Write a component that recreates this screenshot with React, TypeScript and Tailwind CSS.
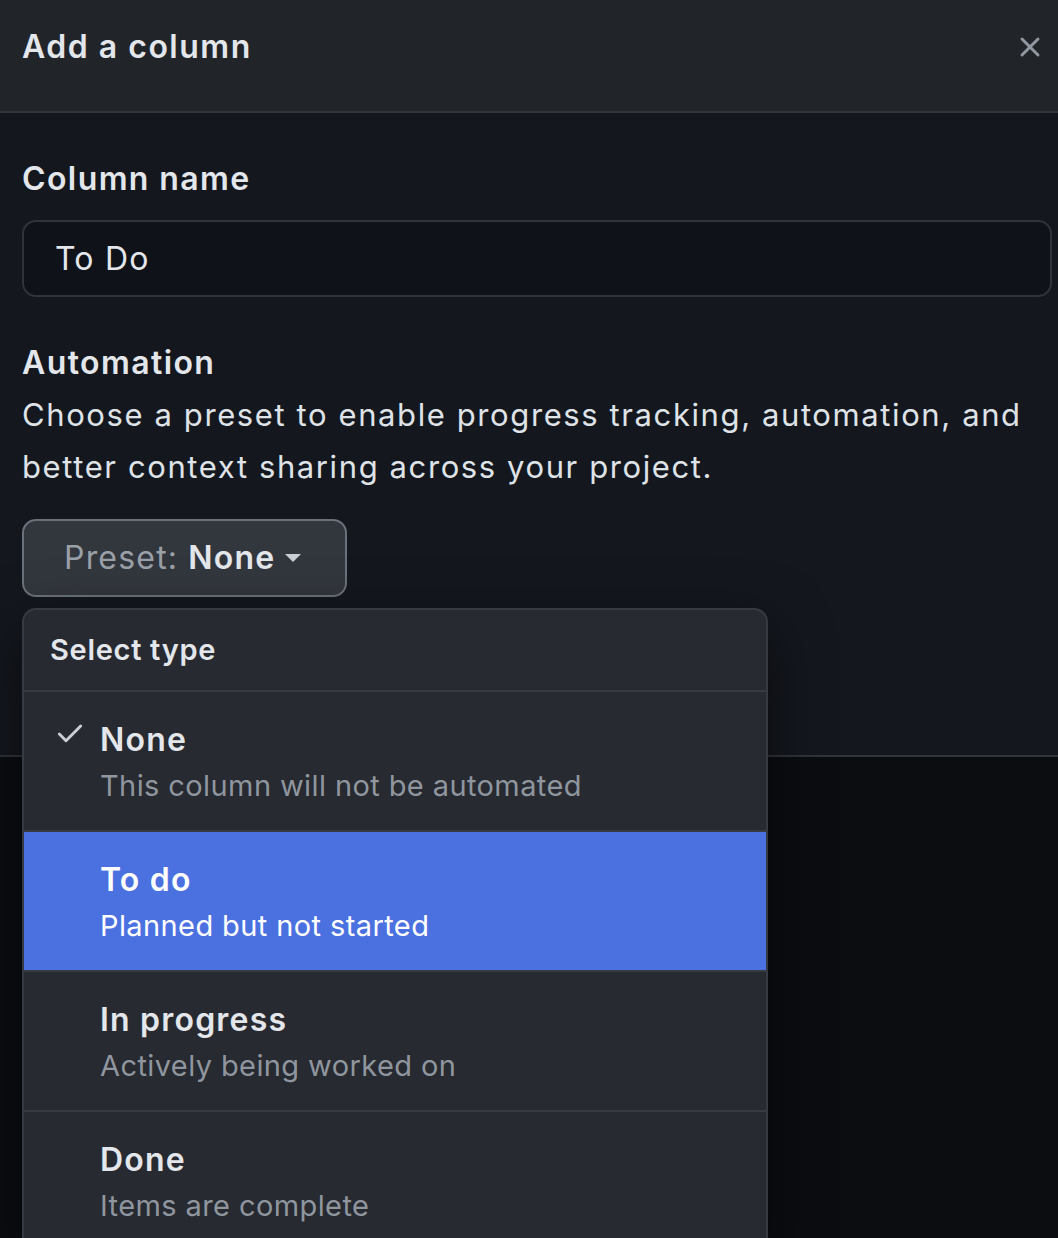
import React from 'react';
import { Check, X } from 'lucide-react';

type Preset = {
  id: string;
  title: string;
  description: string;
};

const PRESETS: Preset[] = [
  { id: 'none', title: 'None', description: 'This column will not be automated' },
  { id: 'todo', title: 'To do', description: 'Planned but not started' },
  { id: 'progress', title: 'In progress', description: 'Actively being worked on' },
  { id: 'done', title: 'Done', description: 'Items are complete' },
];

function PresetMenu({ selected, active }: { selected: string; active: string }) {
  return (
    <div className="absolute left-0 top-[calc(100%+11px)] w-[746px] rounded-[14px] border-2 border-[#363a42] bg-[#272a30] shadow-[0_20px_60px_rgba(0,0,0,0.55)] overflow-hidden">
      <div className="h-[82px] flex items-center px-[26px] border-b-2 border-[#363a42] text-[29px] tracking-[0.7px] font-semibold text-[#e3e7ec]">
        Select type
      </div>
      {PRESETS.map((p, i) => {
        const isActive = p.id === active;
        return (
          <div
            key={p.id}
            className={`relative h-[140px] pt-[28px] pl-[76px] ${i < PRESETS.length - 1 ? 'border-b-2 border-[#363a42]' : ''} ${isActive ? 'bg-[#4b71e0] border-[#4b71e0]' : ''}`}
          >
            {p.id === selected && (
              <Check className="absolute left-[30px] top-[26px] w-[32px] h-[32px] text-[#c9ced5]" strokeWidth={2.2} />
            )}
            <div className={`text-[32px] leading-[40px] tracking-[1.2px] font-semibold ${isActive ? 'text-white' : 'text-[#e3e7ec]'}`}>{p.title}</div>
            <div className={`mt-[6px] text-[29px] leading-[40px] tracking-[0.4px] ${isActive ? 'text-white' : 'text-[#8f969f]'}`}>{p.description}</div>
          </div>
        );
      })}
    </div>
  );
}

export default function App() {
  return (
    <div className="min-h-[1238px] bg-[#0b0d11] overflow-hidden font-['Inter','Liberation_Sans',sans-serif] antialiased">
      <div className="w-full">
        <div className="h-[113px] bg-[#212429] flex items-start justify-between pl-[22px] pr-[8px] pt-[27px] border-b-2 border-[#30343b]">
          <h1 className="text-[32px] leading-[40px] font-semibold text-[#e3e7ec] tracking-[1.5px]">Add a column</h1>
          <button className="w-[40px] h-[40px] flex items-center justify-center text-[#9198a1]">
            <X className="w-[32px] h-[32px]" strokeWidth={2.2} />
          </button>
        </div>

        <div className="h-[644px] bg-[#14171e] border-b-2 border-[#30343b] pl-[22px] pr-[6px] pt-[46px]">
          <label className="block text-[32px] leading-[40px] font-semibold tracking-[1.4px] text-[#e3e7ec]">Column name</label>
          <div className="mt-[21px] h-[77px] rounded-[14px] border-2 border-[#2f333a] bg-[#0f1218] flex items-center px-[31px] text-[32px] tracking-[1.2px] text-[#e3e7ec]">
            To Do
          </div>

          <div className="mt-[46px] text-[32px] leading-[40px] font-semibold tracking-[1.4px] text-[#e3e7ec]">Automation</div>
          <p className="mt-[6px] text-[31px] leading-[52px] tracking-[1.6px] text-[#dfe3e8] pr-[20px]">
            Choose a preset to enable progress tracking, automation, and better context sharing across your project.
          </p>

          <div className="relative mt-[26px] w-fit">
            <button className="h-[78px] w-[325px] rounded-[14px] border-2 border-[#6b717a] bg-[#32363d] flex items-center pl-[40px] gap-[10px] text-[32px] tracking-[1.2px]">
              <span className="text-[#9aa0a8]">Preset:</span>
              <span className="font-semibold text-[#e3e7ec]">None</span>
              <svg width="18" height="10" viewBox="0 0 18 10" className="-ml-[1px]">
                <path d="M1 1h16l-8 8z" fill="#c9ced5" />
              </svg>
            </button>
            <PresetMenu selected="none" active="todo" />
          </div>
        </div>
      </div>
    </div>
  );
}
